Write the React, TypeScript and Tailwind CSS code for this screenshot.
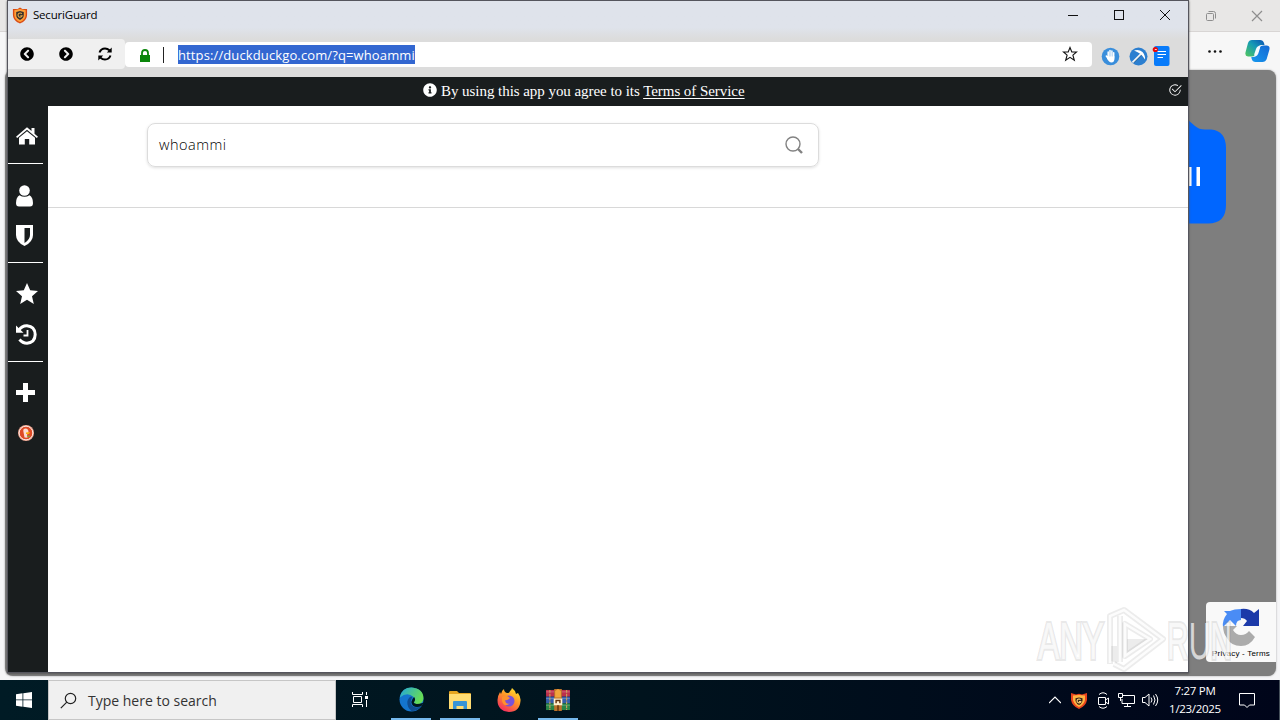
import React from 'react';
import { FaChevronCircleLeft, FaChevronCircleRight, FaInfoCircle } from 'react-icons/fa';
import { BsCheck2Circle } from 'react-icons/bs';

const GuardLogo: React.FC<{ className?: string }> = ({ className }) => (
  <svg viewBox="0 0 16 18" className={className}>
    <path d="M8 0.5 L10.5 2 L15.5 2 V8 C15.5 13 12 16 8 17.5 C4 16 .5 13 .5 8 V2 L5.500 2Z" fill="#d94a13" />
    <path d="M8 2 L14 3.500 V8 C14 12.500 11 14.600 8 16 C5 14.600 2 12.500 2 8 V3.500Z" fill="#ff9f38" />
    <path d="M8 4.200 L12 5.400 V8.500 C12 11 10.500 12.700 8 13.700 C5.500 12.700 4 11 4 8.500 V5.400Z" fill="#35302c" />
    <path d="M9.900 7.300 A2.200 2.200 0 1 0 10.200 9.300 H8.300" fill="none" stroke="#e0a548" strokeWidth="1.2" />
  </svg>
);

// small shield in the notification area
const TrayShield: React.FC<{ className?: string }> = ({ className }) => (
  <svg viewBox="0 0 16 16" className={className}>
    <path d="M0 0 L5 1.500 L8 .8 L11 1.500 L16 0 V7 Q15 13 8 16 Q1 13 0 7Z" fill="#e9441c" />
    <path d="M2 2.500 L8 2 L14 2.500 V7 Q13 11.500 8 14 Q3 11.500 2 7Z" fill="#ffb340" />
    <path d="M8 4.500 L11.500 5.300 V8 Q10.500 11 8 12 Q5.500 11 4.500 8 V5.300Z" fill="#38251a" />
    <path d="M9.500 6.800 A1.900 1.900 0 1 0 9.800 8.500 H8" fill="none" stroke="#ffd477" strokeWidth="1.1" />
  </svg>
);

const EdgeWindow: React.FC = () => (
  <div className="absolute left-0 top-0 flex h-[680px] w-[1280px] flex-col bg-[#f5f5f7]">
    <div className="flex h-8 shrink-0 items-center justify-end border-b border-[#d8d5d4] bg-[#e8e7e6]">
      <svg className="mr-[34px] size-3 overflow-visible" viewBox="0 0 12 12" fill="none" stroke="#8e8e8e">
        <rect x="1.500" y="3.500" width="7" height="7" rx="1" />
        <path d="M3.500 1.500 H8.500 Q10.500 1.500 10.500 3.500 V8.500" />
      </svg>
      <svg className="mr-[17px] size-3" viewBox="0 0 12 12" fill="none" stroke="#8e8e8e" strokeWidth="1.200">
        <path d="M1 1 L11 11 M11 1 L1 11" />
      </svg>
    </div>
    <div className="flex h-[38px] shrink-0 items-center justify-end bg-[#f7f7f7]">
      <svg className="mr-[23px] h-[3px] w-[14px]" viewBox="0 0 14 3" fill="#111">
        <circle cx="1.500" cy="1.500" r="1.300" />
        <circle cx="7" cy="1.500" r="1.300" />
        <circle cx="12.500" cy="1.500" r="1.300" />
      </svg>
      <svg className="mr-[10px] h-6 w-[25px]" viewBox="0 0 25 24">
        <defs>
          <linearGradient id="cpA" x1="0" y1="1" x2="1" y2="0">
            <stop offset="0" stopColor="#52c75c" />
            <stop offset=".55" stopColor="#159bb5" />
            <stop offset="1" stopColor="#0a4fb4" />
          </linearGradient>
          <linearGradient id="cpB" x1="0" y1="1" x2="1" y2="0">
            <stop offset="0" stopColor="#1799ee" />
            <stop offset="1" stopColor="#1568d4" />
          </linearGradient>
        </defs>
        <path d="M7 1 H15 Q18 1 19 4 L19.500 6 H16 Q13.500 6 12.800 8.500 L10.500 15.500 Q9.500 17.500 7 17.500 H3 Q-.5 17 .6 13 L3 4 Q4 1 7 1Z" fill="url(#cpA)" />
        <path d="M17.500 23 H10.500 Q7.500 23 6.700 20 L6.300 18 H8 Q11.500 18 12.500 14.500 L14.700 8.500 Q15.500 6.500 18.500 6.500 H21.500 Q25.500 6.500 24.300 11 L21.700 20 Q20.500 23 17.500 23Z" fill="url(#cpB)" />
        <path d="M11 10 Q12 7 14.500 7 Q15.500 7 15 9 L13.300 14.500 Q12.500 17 10 17 Q8.800 17 9.300 15Z" fill="#f4faff" />
      </svg>
    </div>
    <div className="ml-[5px] mr-1 flex h-[606px] items-start justify-end rounded-lg bg-[#7e7e7e] shadow-[0_0_2px_#999]">
      <svg className="mr-[50px] mt-[50px] h-[104px] w-[50px]" viewBox="0 0 50 104">
        <path d="M0 0 H12 L19 6 Q23 9.500 29 9.500 H35 Q50 11 50 28 V85 Q50 103.500 32 103.500 H0Z" fill="#0066ff" />
        <path d="M11 47 h4.500 v19 h-4.500z M20.500 47 h3.500 v19 h-3.500z" fill="#fff" />
      </svg>
    </div>
  </div>
);

const TitleBar: React.FC = () => (
  <div className="flex h-[38px] shrink-0 items-start bg-linear-to-b from-[#dfe3eb] from-70% to-[#dcdcdc]">
    <GuardLogo className="ml-1 mt-[6px] h-[17px] w-4" />
    <span className="ml-[5px] mt-[6px] font-['Open_Sans',sans-serif] text-[11.500px] leading-4 tracking-[-0.2px] text-black">SecuriGuard</span>
    <div className="ml-auto mr-[18px] mt-[9px] flex gap-[36px]">
      <svg className="size-[10px]" viewBox="0 0 10 10" fill="none" stroke="#111"><path d="M0 5.500 H10" /></svg>
      <svg className="size-[10px]" viewBox="0 0 10 10" fill="none" stroke="#111"><rect x=".5" y=".5" width="9" height="9" /></svg>
      <svg className="size-[10px]" viewBox="0 0 10 10" fill="none" stroke="#111"><path d="M0 0 L10 10 M10 0 L0 10" /></svg>
    </div>
  </div>
);

const AddressBar: React.FC = () => (
  <div className="flex h-[38px] shrink-0 items-start bg-[#dcdcdc]">
    <div className="flex h-[30px] w-[117px] items-center rounded-r bg-[#f0f0f0] pl-3 text-black">
      <FaChevronCircleLeft className="size-[14px]" />
      <FaChevronCircleRight className="ml-[25px] size-[14px]" />
      <svg className="ml-[25px] size-[14px]" viewBox="0 0 14 14">
        <path d="M1.500 5.500 Q3 1.500 7 1.500 Q9.500 1.500 11.500 3.300 M12.500 8.500 Q11 12.500 7 12.500 Q4.500 12.500 2.500 10.700" fill="none" stroke="#000" strokeWidth="2" />
        <path d="M13.700 .6 V5.500 H8.800Z M.3 13.400 V8.500 H5.200Z" />
      </svg>
    </div>
    <div className="mt-[3px] flex h-[25px] w-[967px] items-center rounded bg-white">
      <svg className="ml-[15px] mt-px h-[13px] w-[10px]" viewBox="0 0 10 13">
        <path d="M0 6 H10 V13 H0Z" fill="#0a860a" />
        <path d="M2 6.500 V4 Q2 1 5 1 Q8 1 8 4 V6.500" fill="none" stroke="#0a860a" strokeWidth="1.800" />
      </svg>
      <span className="ml-[13px] h-4 w-px bg-[#222]" />
      <span className="ml-[14px] h-[19px] w-[237px] whitespace-nowrap bg-[#3367d1] font-['Open_Sans',sans-serif] text-[13px] leading-[21px] tracking-[0.12px] text-white">https://duckduckgo.com/?q=whoammi</span>
      <svg className="mb-px ml-auto mr-[14px] size-4" viewBox="0 0 16 16" fill="none" stroke="#111" strokeWidth="1.100">
        <path d="M8 1.500 L9.800 6 H14.500 L10.900 9.200 L12.300 14.300 L8 11.300 L3.700 14.300 L5.100 9.200 L1.500 6 H6.200Z" />
      </svg>
    </div>
    <svg className="ml-[9px] mt-[7.500px] size-[19px]" viewBox="0 0 19 19">
      <circle cx="9.500" cy="9.500" r="8.800" fill="#3a8edb" />
      <path d="M5.300 9 L7.500 12 M7.200 10 V5 M9 10 V3.500 M10.900 10 V4 M12.700 10 V5.700" fill="none" stroke="#fff" strokeWidth="1.500" strokeLinecap="round" />
      <path d="M6.500 9.500 H13.500 V12 Q13 15.500 10.500 15.500 Q8 15.500 6 11.500Z" fill="#fff" />
    </svg>
    <svg className="ml-[9px] mt-[7.500px] size-[19px]" viewBox="0 0 19 19">
      <circle cx="9.500" cy="9.500" r="9" fill="#2c7fd0" />
      <path d="M3.500 15.500 L12 7" stroke="#f5f5f5" strokeWidth="1.800" />
      <path d="M4.800 15.800 L13 7.600" stroke="#25567c" strokeWidth=".8" />
      <path d="M5 3.500 Q10 2 13.500 5 Q16.500 8.500 16 12.500 Q14 9 11.500 7 Q9 5 5 3.500Z" fill="#fff" />
    </svg>
    <svg className="ml-[4px] mt-[7px] h-5 w-[18px]" viewBox="0 0 18 20">
      <rect x="2" y="0" width="15.500" height="20" rx="2" fill="#087bfa" />
      <path d="M5.500 5.500 H14 M5.500 8.500 H14 M5.500 11.500 H11" stroke="#fff" />
      <circle cx="3.300" cy="3.500" r="2.600" fill="#e90808" />
      <path d="M2.800 3.500 h2" stroke="#fff" strokeWidth=".8" />
    </svg>
  </div>
);

const Sidebar: React.FC = () => (
  <div className="flex w-10 shrink-0 flex-col bg-[#191d1e] text-white">
    <svg className="ml-2 mt-[21px] h-[18px] w-[22px] shrink-0" viewBox="0 0 22 18" fill="currentColor">
      <path d="M0 9.700 L11 .2 L15.500 4 V1 H18.500 V6.700 L22 9.700 L20.800 11 L11 2.700 L1.200 11Z" />
      <path d="M3 10.800 L11 4.200 L19 10.800 V17.500 H13.200 V12 H8.800 V17.500 H3Z" />
    </svg>
    <div className="mt-[18px] h-px w-[35px] shrink-0 bg-white" />
    <svg className="ml-2 mt-[21px] h-[22px] w-[17px] shrink-0" viewBox="0 0 17 22" fill="currentColor">
      <circle cx="8.500" cy="5.500" r="5.300" />
      <path d="M3.500 10.300 Q8.500 13.300 13.500 10.300 Q17 12.500 17 18 Q17 21.500 14 21.500 H3 Q0 21.500 0 18 Q0 12.500 3.500 10.300Z" />
    </svg>
    <svg className="ml-2 mt-[18px] h-[21px] w-[17px] shrink-0" viewBox="0 0 17 21" fill="currentColor">
      <path fillRule="evenodd" d="M0 0 H17 V10 Q17 17 8.500 21 Q0 17 0 10Z M8.500 3 V18 Q14 14.500 14 10 V3Z" />
    </svg>
    <div className="mt-[16px] h-px w-[35px] shrink-0 bg-white" />
    <svg className="ml-2 mt-5 h-[22px] w-[22px] shrink-0" viewBox="0 0 22 22" fill="currentColor">
      <path d="M11 0 L14.200 7.300 L22 8 L16 13.200 L17.800 21 L11 16.800 L4.200 21 L6 13.200 L0 8 L7.800 7.300Z" />
    </svg>
    <svg className="ml-2 mt-[19px] h-[21px] w-[21px] shrink-0" viewBox="0 0 21 21">
      <path d="M3 6 Q6 1.600 11 1.800 Q19 2.500 19.200 10.500 Q19 18.500 11 19.200 Q6.500 19.200 3.500 15.500" fill="none" stroke="#fff" strokeWidth="3" />
      <path d="M0 1.500 L7.500 8.700 H0Z" fill="#fff" />
      <path d="M11.500 6 V11.500 H7.500" fill="none" stroke="#fff" strokeWidth="1.800" />
    </svg>
    <div className="mt-[16px] h-px w-[35px] shrink-0 bg-white" />
    <svg className="ml-2 mt-[21px] size-[19px] shrink-0" viewBox="0 0 19 19" fill="currentColor">
      <path d="M7 0 H12 V7 H19 V12 H12 V19 H7 V12 H0 V7 H7Z" />
    </svg>
    <svg className="ml-[10px] mt-[23px] size-4 shrink-0" viewBox="0 0 16 16">
      <circle cx="8" cy="8" r="8" fill="#f0a58f" />
      <circle cx="8" cy="8" r="6.800" fill="#de4b26" stroke="#fff" strokeWidth=".8" />
      <path d="M6.500 12.500 L5.300 6 Q5 3.500 7.500 3.500 Q10.500 3.700 10.500 7 L9 10 L9.500 12.800Z" fill="#fbdcd2" />
      <path d="M8 7.500 L12 7 L11 9 H8Z" fill="#fdb20a" />
      <path d="M8.500 11 L11.500 10.500 V12.500Z" fill="#65bc46" />
    </svg>
  </div>
);

const GuardWindow: React.FC = () => (
  <div className="absolute left-[7px] top-0 flex h-[673px] w-[1182px] flex-col border border-[#55555d] bg-white shadow-[0_1px_2px_#555]">
    <TitleBar />
    <AddressBar />
    <div className="flex h-[29px] shrink-0 items-center bg-[#191d1e] text-white">
      <FaInfoCircle className="ml-[415px] mb-[3px] size-[14px]" />
      <span className="ml-1 whitespace-nowrap font-['Liberation_Serif',serif] text-[15px] leading-[27px] tracking-[-0.05px]">
        By using this app you agree to its <u className="underline-offset-2">Terms of Service</u>
      </span>
      <BsCheck2Circle className="mb-[3px] ml-auto mr-[6px] size-[14px]" />
    </div>
    <div className="flex min-h-0 flex-1">
      <Sidebar />
      <div className="flex flex-1 flex-col bg-white">
        <div className="h-[102px] border-b border-[#d8d8d8] pl-[99px] pt-[17px]">
          <div className="flex h-11 w-[672px] items-center rounded-lg border border-[#dcdcdc] pl-[11px] pr-[15px] shadow-[0_1px_3px_#00000020]">
            <span className="font-['Open_Sans',sans-serif] text-[14.500px] font-light leading-5 tracking-[0.5px] text-black">whoammi</span>
            <svg className="ml-auto size-[18px]" viewBox="0 0 18 18" fill="none" stroke="#828282">
              <circle cx="8" cy="8" r="7" strokeWidth="1.400" />
              <path d="M13 13 L17 17" strokeWidth="2.400" />
            </svg>
          </div>
        </div>
      </div>
    </div>
  </div>
);

const Recaptcha: React.FC = () => (
  <div className="absolute left-[1206px] top-[602px] flex h-[60px] w-[70px] flex-col items-center rounded-l-sm bg-[#f9f9f9]">
    <svg className="mt-[5px] h-[40px] w-[38px] shrink-0" viewBox="0 0 38 40">
      <path d="M19 2 V13 Q14 13 14 19 L8 13 L1 20 Q0 13 5 7 L2 4 H8 Q12 2 19 2Z" fill="#4a8cf5" />
      <path d="M19 2 Q27 1 32 6 L37 2 V19 H21 L25 14 Q23 11 19 11Z" fill="#1c3aa9" />
      <path d="M1 19 H15 L11 23 Q14 28 19 28 Q24 28 27 24 L33 30 Q28 39 19 39 Q9 39 5 31 Q1 26 1 19Z" fill="#ababab" />
    </svg>
    <span className="mt-px whitespace-nowrap font-['Liberation_Sans',sans-serif] text-[8px] leading-3 tracking-[0.2px] text-black">Privacy - Terms</span>
  </div>
);

const Watermark: React.FC = () => (
  <svg className="absolute left-[1030px] top-[604px] h-[72px] w-[240px]" viewBox="0 0 240 72">
    <g stroke="#888888" strokeOpacity=".16" strokeWidth="6" fill="none" strokeLinejoin="round">
      <path d="M80 60 V12 L94 6 L133 35 L94 65 L84 60 M90 12 V58" />
      <path d="M95 20 V52 L120 35Z" />
    </g>
    <path d="M97 35 H118 L97 49Z M81 42 H87 V59 L81 57Z" fill="#888888" fillOpacity=".16" />
    <path d="M80 59 V12 L94 6 L133 35 L94 65 L84 60 M90 12 V58 M95 20 V52 L120 35Z" fill="none" stroke="#fff" strokeOpacity=".85" strokeWidth="2.500" />
    <g fontFamily="Liberation Sans, sans-serif" fontSize="52" fill="#ffffff" fillOpacity=".7" stroke="#777777" strokeOpacity=".18" strokeWidth="4" paintOrder="stroke">
      <text x="8" y="55" textLength="66" lengthAdjust="spacingAndGlyphs">ANY</text>
      <text x="137" y="55" textLength="65" lengthAdjust="spacingAndGlyphs">RUN</text>
    </g>
  </svg>
);

const AppTile: React.FC<{ active?: boolean; children: React.ReactNode }> = ({ active, children }) => (
  <div className={`flex h-10 w-10 items-center justify-center border-b-2 ${active ? 'border-[#76b9ed]' : 'border-transparent'}`}>
    {children}
  </div>
);

const Taskbar: React.FC = () => (
  <div className="absolute left-0 top-[680px] flex h-10 w-[1280px] bg-linear-to-r from-[#001b25] via-[#00131d] to-[#00051a] text-white">
    <div className="flex w-12 items-center justify-center">
      <svg className="size-4" viewBox="0 0 16 16" fill="#fff">
        <path d="M0 2.200 L6.500 1.300 V7.500 H0Z M7.300 1.200 L16 0 V7.500 H7.300Z M0 8.300 H6.500 V14.700 L0 13.800Z M7.300 8.300 H16 V16 L7.300 14.800Z" />
      </svg>
    </div>
    <div className="flex w-[288px] items-center border border-[#c6c6c6] bg-[#f0f0f0]">
      <svg className="ml-[11px] size-[17px]" viewBox="0 0 17 17" fill="none" stroke="#222" strokeWidth="1.200">
        <circle cx="10.500" cy="6.500" r="5.200" />
        <path d="M6.800 10.200 L.8 16.200" />
      </svg>
      <span className="ml-[11px] mt-[2px] font-['Open_Sans',sans-serif] text-[14px] leading-5 text-[#333]">Type here to search</span>
    </div>
    <div className="ml-[3px] flex gap-[9px]">
      <AppTile>
        <svg className="mt-px size-[17px]" viewBox="0 0 17 17" fill="none" stroke="#fff">
          <path d="M1.500 1 V3.500 H11.500 V1 M1.500 16 V13.500 H11.500 V16 M2.500 5.500 H10.500 V11.500 H2.500Z M15.500 1 V4 M15.500 9 V16" />
          <path d="M14 5 h3 v3 h-3z" fill="#fff" stroke="none" />
        </svg>
      </AppTile>
      <div className="flex gap-[9px] pl-[3px]">
        <AppTile active>
          <svg className="mt-px size-[25px]" viewBox="0 0 24 24">
            <defs>
              <linearGradient id="edgeA" x1="0" y1="0" x2="1" y2=".4">
                <stop offset="0" stopColor="#22a6dc" />
                <stop offset="1" stopColor="#66dc55" />
              </linearGradient>
            </defs>
            <circle cx="12" cy="12" r="11.500" fill="#1475ce" />
            <path d="M.8 10 Q2.500 .5 12 .5 Q23.500 1.500 23.500 11 Q23 16 18 16.500 Q14.500 16.500 14 14.500 Q16 12 14 9.500 Q8 4 .8 10Z" fill="url(#edgeA)" />
            <path d="M8 14 Q9 9 13 9 Q9 16 14 19 Q18 20.500 22 18 Q18 23 12 23 Q7.500 19.500 8 14Z" fill="#104d91" />
            <path d="M14.500 9.500 Q16.500 12 14.200 14.800 Q15 17.500 23.500 15 L21.800 18 Q17 20.500 13.500 18 Q10 14 14.500 9.500Z" fill="#001720" />
          </svg>
        </AppTile>
        <AppTile active>
          <svg className="mt-[2px] h-[19px] w-[22px]" viewBox="0 0 22 19">
            <path d="M0 1 Q0 0 1 0 H8 L10 2 H21 Q22 2 22 3 V18 H0Z" fill="#e5a520" />
            <path d="M0 3 H22 V18 H0Z" fill="#ffdc72" />
            <path d="M4 18 V11 Q4 10 5 10 H17 Q18 10 18 11 V18 H14.500 V15 H7.500 V18Z" fill="#3794d6" />
          </svg>
        </AppTile>
        <AppTile>
          <svg className="mt-px size-6" viewBox="0 0 24 24">
            <defs>
              <linearGradient id="foxA" x1=".8" y1="0" x2=".2" y2="1">
                <stop offset="0" stopColor="#ffe52e" />
                <stop offset=".45" stopColor="#ff9229" />
                <stop offset="1" stopColor="#f22364" />
              </linearGradient>
            </defs>
            <path d="M15 0 Q18 2 19 6 L21 5 Q24 9 23.500 13 Q22.500 24 12 24 Q.5 23 .5 12 Q1 7 3 4 L4 6 Q5 2 7 1 Q7 4 10 5 Q13 5 13 3 Q14 3 15 0Z" fill="url(#foxA)" />
            <circle cx="12" cy="13" r="5.500" fill="#7852d9" />
            <path d="M5 9 Q9 6 13 10 Q10 13 8 12 Q9 17 13 15.500 Q7 20 5 13Z" fill="#ff912d" />
          </svg>
        </AppTile>
        <AppTile active>
          <svg className="mt-[2px] h-[22px] w-[24px]" viewBox="0 0 25 23">
            <path d="M0 1 H25 V8 H0Z" fill="#bd304b" />
            <path d="M0 8 H25 V15 H0Z" fill="#345eaa" />
            <path d="M0 15 H25 V22 H0Z" fill="#278547" />
            <path d="M0 3 H25 M0 10 H25 M0 17 H25" stroke="#fff" strokeOpacity=".25" />
            <path d="M4 1 V22 M21.500 1 V22" stroke="#c9a05c" strokeWidth="1.200" strokeDasharray="3 1" />
            <path d="M8.500 0 H16.500 V23 H8.500Z" fill="#bb732b" />
            <path d="M9.500 2 L12.500 0 L15.500 2 V9 H9.500Z" fill="#f2a53a" />
            <path d="M8 10 H17 V17 H8Z" fill="#fff0cf" />
            <path d="M10.500 15 V12 H14.500 V15 M12.500 17 V23" fill="none" stroke="#63320a" strokeWidth="1.500" />
          </svg>
        </AppTile>
      </div>
    </div>
    <div className="ml-auto flex items-center">
      <svg className="size-3" viewBox="0 0 12 12" fill="none" stroke="#fff" strokeWidth="1.200"><path d="M0 9 L6 3 L12 9" /></svg>
      <TrayShield className="ml-[10px] mt-px size-4" />
      <svg className="ml-[10px] mr-px h-[17px] w-3" viewBox="0 0 12 17" fill="none" stroke="#fff">
        <path d="M2 2.500 Q6 -1 10 2.500 M2 14.500 Q6 18 10 14.500 M1.500 5.500 H8.500 V12.500 H1.500Z M8.500 8 L11.500 6 V12 L8.500 10" />
      </svg>
      <svg className="ml-[8px] h-4 w-[17px]" viewBox="0 0 17 16" fill="none" stroke="#fff">
        <path d="M5 3.500 H16.500 V11.500 H4 V7 M6 14.500 H13 M9.500 11.500 V14.500 M.5 1.500 H4.500 V5.500 H.5Z M2.500 5.500 V9" />
      </svg>
      <svg className="ml-[7px] mr-px h-4 w-[17px]" viewBox="0 0 17 16" fill="none" stroke="#fff">
        <path d="M.5 5.500 H3 L7 2 V14 L3 10.500 H.5Z M9 5.500 Q11 8 9 10.500 M11.500 3.500 Q14.500 8 11.500 12.500 M13.500 2 Q18 8 13.500 14" />
      </svg>
      <div className="ml-[7px] flex w-[56px] flex-col items-center whitespace-nowrap font-['Open_Sans',sans-serif] text-[11.500px] leading-[18px] tracking-[-0.3px]">
        <span>7:27 PM</span>
        <span>1/23/2025</span>
      </div>
      <svg className="ml-[16px] mr-[24px] size-4" viewBox="0 0 16 16" fill="none" stroke="#fff">
        <path d="M.5 1.500 H15.500 V13 H10.500 L8 15.500 L5.500 13 H.5Z" />
      </svg>
      <div className="h-10 w-px bg-[#46505a]" />
    </div>
  </div>
);

const App: React.FC = () => {
  return (
    <div className="relative h-[720px] w-[1280px] overflow-hidden bg-[#f5f5f7]">
      <EdgeWindow />
      <GuardWindow />
      <Recaptcha />
      <Watermark />
      <Taskbar />
    </div>
  );
};

export default App;
